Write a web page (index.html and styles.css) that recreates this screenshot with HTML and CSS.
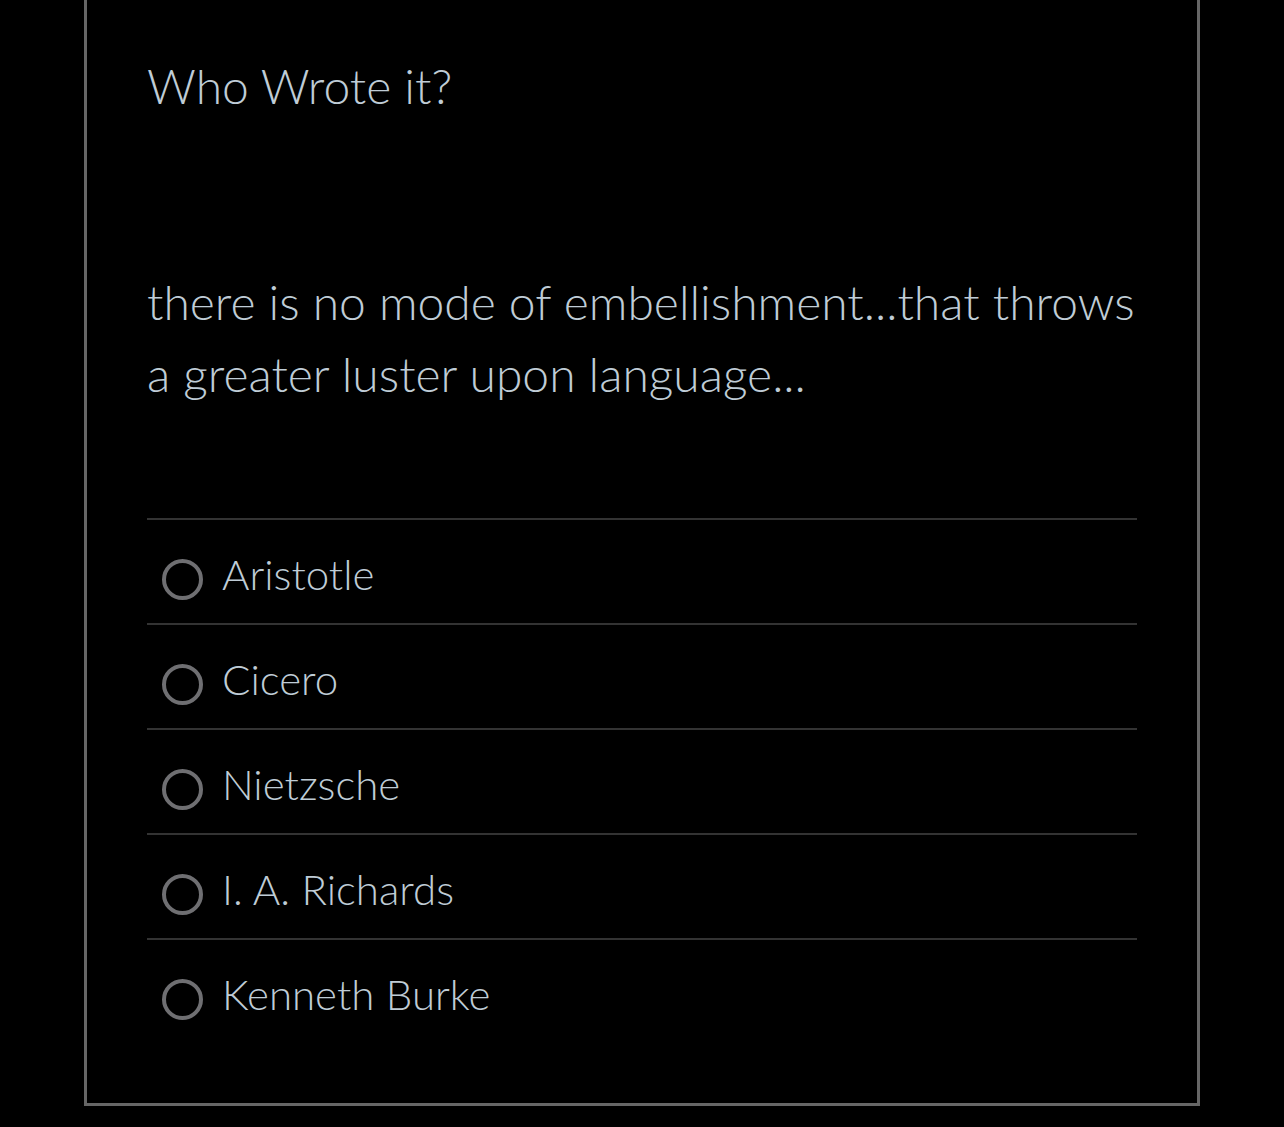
FILE: index.html
```html
<!DOCTYPE html>
<html lang="en">
<head>
<meta charset="utf-8">
<title>Who Wrote it?</title>
<link rel="stylesheet" href="styles.css">
</head>
<body>
<div class="card">
  <h1 class="title">Who Wrote it?</h1>
  <p class="quote">there is no mode of embellishment...that throws a greater luster upon language...</p>
  <ul class="options">
    <li class="option"><span class="radio"></span><span class="label">Aristotle</span></li>
    <li class="option"><span class="radio"></span><span class="label">Cicero</span></li>
    <li class="option"><span class="radio"></span><span class="label">Nietzsche</span></li>
    <li class="option"><span class="radio"></span><span class="label">I. A. Richards</span></li>
    <li class="option"><span class="radio"></span><span class="label">Kenneth Burke</span></li>
  </ul>
</div>
</body>
</html>
```

FILE: styles.css
```css
html, body {
  margin: 0;
  padding: 0;
  background: #000;
}
body {
  font-family: Lato, "Open Sans", sans-serif;
  font-weight: 300;
  color: #bfccd6;
}
.card {
  box-sizing: border-box;
  margin-left: 84px;
  width: 1116px;
  height: 1106px;
  border: 3px solid #666;
  border-top: none;
  padding: 57px 60px 0 60px;
}
.title {
  margin: 0;
  font-size: 48px;
  font-weight: 300;
  line-height: 1.2;
}
.quote {
  margin: 151px 0 0 0;
  font-size: 48px;
  line-height: 72px;
}
.options {
  list-style: none;
  margin: 108px 0 0 0;
  padding: 0;
}
.option {
  display: flex;
  align-items: center;
  border-top: 2px solid #333;
  padding: 29px 0 23px 15px;
}
.radio {
  box-sizing: border-box;
  width: 41px;
  height: 41px;
  margin-top: 10px;
  border: 4px solid #6f6f72;
  border-radius: 50%;
  flex-shrink: 0;
}
.label {
  margin-left: 19px;
  font-size: 42px;
  line-height: 1.2;
}
```
